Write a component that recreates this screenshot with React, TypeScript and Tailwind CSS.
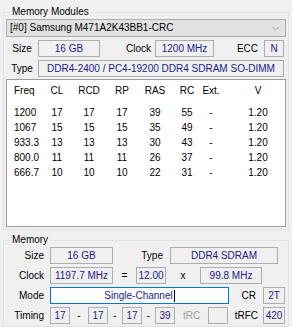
import { ChevronDown } from 'lucide-react';

const rows = [
    ['1200', '17', '17', '17', '39', '55', '-', '1.20'],
    ['1067', '15', '15', '15', '35', '49', '-', '1.20'],
    ['933.3', '13', '13', '13', '30', '43', '-', '1.20'],
    ['800.0', '11', '11', '11', '26', '37', '-', '1.20'],
    ['666.7', '10', '10', '10', '22', '31', '-', '1.20'],
];

const cols = ['Freq', 'CL', 'RCD', 'RP', 'RAS', 'RC', 'Ext.', 'V'];

function Box({ children, className = '' }: { children?: React.ReactNode; className?: string }) {
    return (
        <div
            className={`h-[17px] border border-[#adadad] bg-[#f0f0f0] flex items-center justify-center text-[#1a1a8a] ${className}`}
        >
            {children}
        </div>
    );
}

export default function App() {
    return (
        <div
            className="w-[292px] h-[327px] bg-[#f0f0f0] text-[10px] text-black overflow-hidden leading-none"
            style={{ fontFamily: '"Liberation Sans", Arial, sans-serif' }}
        >
            {/* Memory Modules */}
            <fieldset className="mx-[3px] mt-[6px] h-[224px] border border-[#e2e2e2] px-[2px]">
                <legend className="ml-[4px] px-[2px] leading-[12px]">Memory Modules</legend>

                <div className="mt-[1px] h-[18px] border border-[#adadad] bg-[#e1e1e1] flex items-center justify-between pl-[3px] pr-[4px]">
                    <span>[#0] Samsung M471A2K43BB1-CRC</span>
                    <ChevronDown size={11} strokeWidth={1} className="text-[#606060]" />
                </div>

                <div className="mt-[3px] flex items-center">
                    <div className="w-[32px] text-center">Size</div>
                    <Box className="w-[62px]">16 GB</Box>
                    <div className="w-[55px] text-right pr-[4px]">Clock</div>
                    <Box className="w-[59px]">1200 MHz</Box>
                    <div className="w-[50px] text-right pr-[6px]">ECC</div>
                    <Box className="w-[20px]">N</Box>
                </div>

                <div className="mt-[3px] flex items-center">
                    <div className="w-[32px] text-center">Type</div>
                    <Box className="w-[246px]">DDR4-2400 / PC4-19200 DDR4 SDRAM SO-DIMM</Box>
                </div>

                <div className="mt-[2px] h-[148px] border border-[#9a9a9a] bg-white pt-[5px]">
                    <div className="grid grid-cols-[38px_24px_40px_26px_40px_24px_24px_1fr] h-[12px] items-center">
                        {cols.map((c, i) => (
                            <div key={c} className={i === 0 ? 'pl-[7px]' : i === 7 ? 'pl-[8px] text-center' : 'text-center'}>
                                {c}
                            </div>
                        ))}
                    </div>
                    <div className="mt-[8px] flex flex-col">
                        {rows.map((r) => (
                            <div key={r[0]} className="grid grid-cols-[38px_24px_40px_26px_40px_24px_24px_1fr] h-[15px] items-center">
                                {r.map((v, i) => (
                                    <div key={i} className={i === 0 ? 'pl-[7px]' : i === 7 ? 'pl-[8px] text-center' : 'text-center'}>
                                        {v}
                                    </div>
                                ))}
                            </div>
                        ))}
                    </div>
                </div>
            </fieldset>

            {/* Memory */}
            <fieldset className="mx-[3px] mt-[4px] h-[93px] border border-[#e2e2e2] px-[2px]">
                <legend className="ml-[4px] px-[2px] leading-[12px]">Memory</legend>

                <div className="mt-[1px] flex items-center">
                    <div className="w-[38px] text-right">Size</div>
                    <Box className="ml-[6px] w-[63px]">16 GB</Box>
                    <div className="w-[57px] text-right pr-[7px]">Type</div>
                    <Box className="w-[108px]">DDR4 SDRAM</Box>
                </div>

                <div className="mt-[3px] flex items-center">
                    <div className="w-[38px] text-right">Clock</div>
                    <Box className="ml-[6px] w-[63px]">1197.7 MHz</Box>
                    <div className="w-[23px] text-center">=</div>
                    <Box className="w-[30px]">12.00</Box>
                    <div className="w-[34px] text-center">x</div>
                    <Box className="w-[62px]">99.8 MHz</Box>
                </div>

                <div className="mt-[3px] flex items-center">
                    <div className="w-[38px] text-right">Mode</div>
                    <div className="ml-[6px] w-[179px] h-[17px] border border-[#0078d7] bg-white flex items-center justify-center text-[#1a1a8a]">
                        Single-Channel
                        <span className="ml-px w-px h-[12px] bg-black" />
                    </div>
                    <div className="w-[34px] text-right pr-[7px]">CR</div>
                    <Box className="w-[22px]">2T</Box>
                </div>

                <div className="mt-[3px] flex items-center">
                    <div className="w-[38px] text-right">Timing</div>
                    <Box className="ml-[6px] w-[20px]">17</Box>
                    <div className="w-[18px] text-center">-</div>
                    <Box className="w-[20px]">17</Box>
                    <div className="w-[14px] text-center">-</div>
                    <Box className="w-[20px]">17</Box>
                    <div className="w-[13px] text-center">-</div>
                    <Box className="w-[20px]">39</Box>
                    <div className="w-[33px] text-center text-[#a0a0a0]">tRC</div>
                    <Box className="w-[20px]" />
                    <div className="w-[35px] text-right pr-[5px]">tRFC</div>
                    <Box className="w-[22px]">420</Box>
                </div>
            </fieldset>
        </div>
    );
}
